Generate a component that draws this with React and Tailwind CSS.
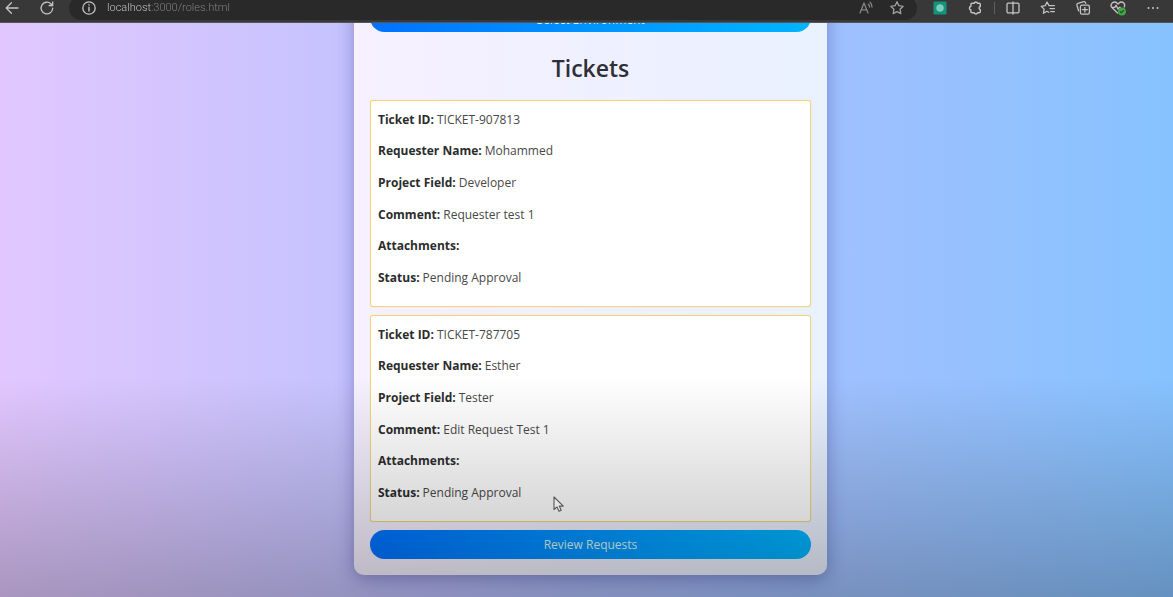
const TICKETS = [
  { id: "TICKET-907813", name: "Mohammed", field: "Developer", comment: "Requester test 1" },
  { id: "TICKET-787705", name: "Esther", field: "Tester", comment: "Edit Request Test 1" },
];

function Icon({ children, className = "text-[#c4c4c4]" }) {
  return (
    <svg
      viewBox="0 0 16 16"
      fill="none"
      stroke="currentColor"
      strokeWidth="1.3"
      strokeLinecap="round"
      strokeLinejoin="round"
      className={`size-4 shrink-0 ${className}`}
      aria-hidden="true"
    >
      {children}
    </svg>
  );
}

function BarButton({ label, children, className }) {
  return (
    <button type="button" aria-label={label} className="flex size-4 shrink-0 items-center justify-center">
      <Icon className={className}>{children}</Icon>
    </button>
  );
}

function BrowserBar() {
  return (
    <header className="relative z-10 h-[23px] shrink-0 overflow-hidden border-b border-[#555] bg-[#383838]">
      <div className="-mt-1 flex h-6 items-center pr-3 pl-1">
        <BarButton label="Back">
          <path d="M14 8H2.3M7.4 2.8 2.2 8l5.2 5.2" />
        </BarButton>
        <div className="ml-[19px] flex">
          <BarButton label="Reload">
            <path d="M13.7 8.2A5.8 5.8 0 1 1 11.9 3.8L13.6 5.4M13.7 1.9v3.6h-3.6" />
          </BarButton>
        </div>
        <div className="ml-[14px] flex h-6 min-w-0 flex-1 items-center rounded-full bg-[#292929] pr-3 pl-3">
          <Icon>
            <circle cx="8" cy="8" r="6.2" />
            <path d="M8 7.3v3.8M8 4.8v.3" strokeWidth="1.4" />
          </Icon>
          <input
            type="text"
            aria-label="Address"
            defaultValue="localhost:3000/roles.html"
            className="ml-[10px] min-w-0 flex-1 bg-[linear-gradient(to_right,#d0d0d0_44px,#858585_44px)] bg-clip-text font-[Roboto,sans-serif] text-[11px] leading-4 font-light text-transparent outline-none"
          />
          <div className="flex gap-[15px]">
            <BarButton label="Read aloud" className="text-[#858585]">
              <path d="M2 13 6 3l4 10M3.3 9.8h5.4M10.3 4.2a4 4 0 0 1 1.3 2.8M12 2.2A7 7 0 0 1 14 7" />
            </BarButton>
            <BarButton label="Add to favorites" className="text-[#a0a0a0]">
              <path d="m8 1.8 1.9 3.9 4.3.6-3.1 3 .7 4.3L8 11.6l-3.8 2 .7-4.3-3.1-3 4.3-.6z" />
            </BarButton>
          </div>
        </div>
        <div className="ml-[15px] flex items-center gap-[19px]">
          <button type="button" aria-label="Assistant" className="flex size-4 shrink-0 items-center justify-center">
            <svg viewBox="0 0 16 16" className="size-4" aria-hidden="true">
              <rect x="1.5" y="1.5" width="13" height="13" rx="1.2" fill="#10957c" />
              <circle cx="8" cy="8" r="3.8" fill="#75c8b8" />
              <path d="m8 5.4 2.2 1.3v2.6L8 10.6 5.8 9.3V6.7z" fill="none" stroke="#93d6c8" strokeWidth=".8" />
            </svg>
          </button>
          <BarButton label="Extensions">
            <path
              d="M5 3.3h2.2a1.7 1.7 0 0 1 3.3 0h1.7a1.1 1.1 0 0 1 1.1 1.1v2.1a1.6 1.6 0 0 0 0 3.1v2.1a1.1 1.1 0 0 1-1.1 1.1h-1.6a1.8 1.8 0 0 1-3.4 0H5a1.1 1.1 0 0 1-1.1-1.1V10a1.9 1.9 0 0 1 0-3.7V4.4A1.1 1.1 0 0 1 5 3.3z"
              strokeWidth="1.4"
            />
          </BarButton>
        </div>
        <div className="ml-[11px] h-3 w-px shrink-0 bg-[#606060]" />
        <div className="ml-[10px] flex gap-[19px]">
          <BarButton label="Split screen">
            <path d="M3.2 3.2h9.6A1.2 1.2 0 0 1 14 4.4v7.2a1.2 1.2 0 0 1-1.2 1.2H3.2A1.2 1.2 0 0 1 2 11.6V4.4a1.2 1.2 0 0 1 1.2-1.2zM8 1.8v12.4" />
          </BarButton>
          <BarButton label="Favorites">
            <path d="M9 5.6 7 2 5.2 5.7l-4 .6 2.9 2.8-.7 4.2L7 11.3l1.7 1M9 5.6h5.4M10 8.6h4.4M10.6 11.6h3.8" />
          </BarButton>
          <BarButton label="Collections">
            <rect x="5.4" y="5.2" width="9" height="9" rx="1.6" />
            <path d="M9.9 7.3v4.8M7.5 9.7h4.8M3.6 10.9 1.9 5.2a1.5 1.5 0 0 1 1-1.8l5.8-1.7a1.5 1.5 0 0 1 1.8 1l.2.6" />
          </BarButton>
          <BarButton label="Browser essentials">
            <path d="M7.5 13 2.2 7.8a3.4 3.4 0 0 1 0-4.8 3.3 3.3 0 0 1 4.7 0L8 4l1-1a3.3 3.3 0 0 1 4.7 0 3.4 3.4 0 0 1 .5 4M1.8 7.3h3l1.3-2.1 2 4 1.2-1.9h1" />
            <circle cx="11.9" cy="11.5" r="4" fill="#43a648" stroke="none" />
            <path d="m10.1 11.6 1.2 1.2 2.3-2.4" stroke="#1e5724" />
          </BarButton>
          <BarButton label="More">
            <path d="M3.5 8h.01M8 8h.01M12.5 8h.01" strokeWidth="2" />
          </BarButton>
        </div>
      </div>
    </header>
  );
}

function PillButton({ children, className = "pt-px" }) {
  return (
    <button
      type="button"
      className={`h-[29px] w-full rounded-full bg-linear-to-r from-[#0072ff] to-[#00b4ff] text-center text-[12px] leading-4 text-[#d8f4f0] ${className}`}
    >
      {children}
    </button>
  );
}

function Field({ label, value }) {
  return (
    <p className="flex items-center gap-[3px]">
      <strong className="font-bold text-[#2c2c2c]">{label}:</strong>
      <span>{value}</span>
    </p>
  );
}

function Ticket({ ticket }) {
  return (
    <article className="rounded-[3px] border border-[#f3d47c] bg-white px-[7px] pt-[3px] pb-3 shadow-[0_0_1px_#f3d47c]">
      <div className="grid min-h-[190px] auto-rows-fr text-[12px] leading-4 text-[#484848]">
        <Field label="Ticket ID" value={ticket.id} />
        <Field label="Requester Name" value={ticket.name} />
        <Field label="Project Field" value={ticket.field} />
        <Field label="Comment" value={ticket.comment} />
        <Field label="Attachments" value="" />
        <Field label="Status" value="Pending Approval" />
      </div>
    </article>
  );
}

export default function App() {
  return (
    <div className="relative flex h-screen flex-col overflow-hidden bg-linear-to-r from-[#e2c7ff] via-[#b0bffd] to-[#86c2ff] font-['Open_Sans','Noto_Sans',sans-serif]">
      <BrowserBar />
      <main className="-mt-5 flex items-start justify-center pl-2">
        <section className="w-[473px] max-w-full rounded-b-[10px] bg-linear-to-r from-[#f6f0ff] to-[#e9f1ff] px-4 pb-4 shadow-[0_4px_18px_rgba(50,50,130,0.4)]">
          <PillButton className="pt-1">Select Environment</PillButton>
          <h1 className="mt-5 mb-4 text-center text-[23px] leading-8 font-semibold text-[#2f2f38]">Tickets</h1>
          <div className="flex flex-col gap-2">
            {TICKETS.map((ticket) => (
              <Ticket key={ticket.id} ticket={ticket} />
            ))}
            <PillButton>Review Requests</PillButton>
          </div>
        </section>
      </main>
      <div className="pointer-events-none absolute inset-x-0 bottom-0 h-[220px] bg-linear-to-b from-black/0 to-black/25" />
      <svg viewBox="0 0 12 18" className="pointer-events-none absolute top-[496px] left-[553px] h-[18px] w-3" aria-hidden="true">
        <path d="M1 1v12.5l3-2.6 2 4.3 2.2-1-1.9-4.1h4z" fill="#e6e6e6" stroke="#555" strokeWidth="1.1" strokeLinejoin="round" />
      </svg>
    </div>
  );
}
